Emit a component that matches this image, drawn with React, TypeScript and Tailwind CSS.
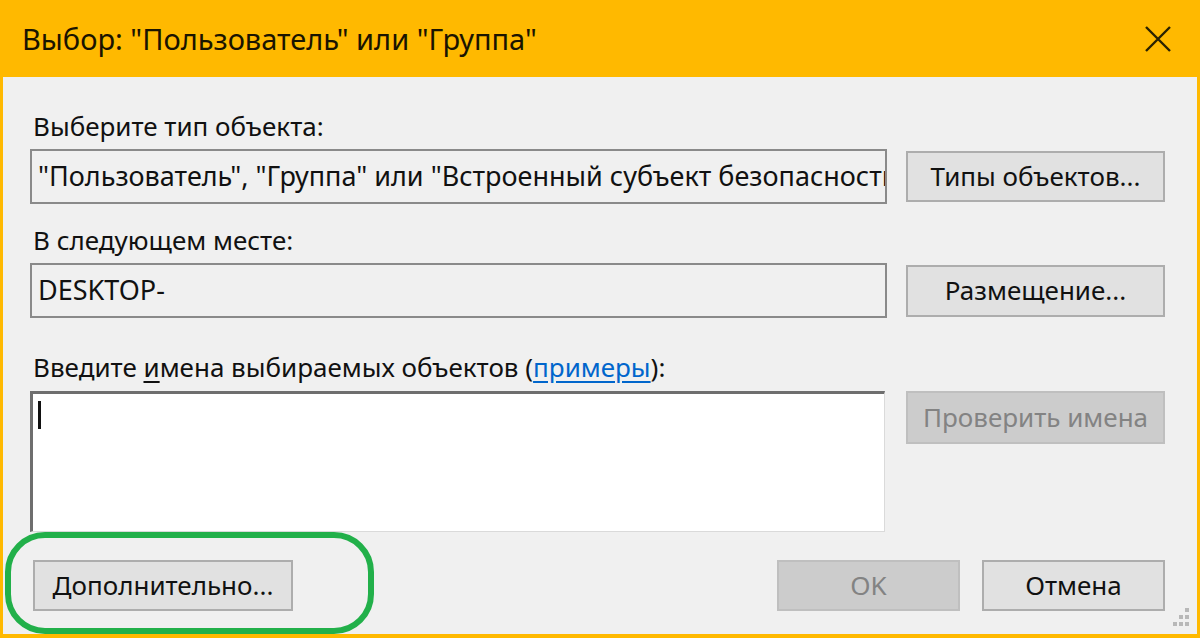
import React from "react";

const font = { fontFamily: '"Noto Sans", "Open Sans", sans-serif' };

type BtnProps = {
    label: string;
    disabled?: boolean;
    className?: string;
}

const Btn = ({ label, disabled, className }: BtnProps) => {
    return <div
        className={`flex items-center justify-center border-2 text-[26px] ${disabled ? "bg-[#cccccc] border-[#bfbfbf] text-[#838383]" : "bg-[#e1e1e1] border-[#adadad] text-[#111]"} ${className ?? ""}`}
    >
        {label}
    </div>
}

const CloseIcon = () => (
    <svg width="28" height="28" viewBox="0 0 28 28">
        <path d="M2 2 L26 26 M26 2 L2 26" stroke="#2a2200" strokeWidth="2.4" fill="none"/>
    </svg>
)

const SizeGrip = () => (
    <svg width="24" height="22" viewBox="0 0 24 22" className="absolute right-[6px] bottom-[6px]">
        {[[18, 2], [12, 9], [18, 9], [6, 16], [12, 16], [18, 16]].map(([x, y], i) => (
            <rect key={i} x={x} y={y} width="4" height="4" fill="#b8b8b8"/>
        ))}
    </svg>
)

export default function App() {
    return <div className="w-[1200px] h-[638px] bg-[#ffb900] flex flex-col overflow-hidden" style={font}>
        <div className="h-[77px] shrink-0 flex items-center justify-between pl-[22px] pr-[28px]">
            <span className="text-[29px] text-[#1a1400]">Выбор: "Пользователь" или "Группа"</span>
            <CloseIcon/>
        </div>
        <div className="relative flex-1 mx-[3px] mb-[4px] bg-[#f0f0f0] pl-[27px] pr-[32px] pt-[33px] text-[26px] text-[#111]">
            <div className="leading-[32px] pl-[3px]">Выберите тип объекта:</div>
            <div className="flex items-center gap-[19px] mt-[7px]">
                <div className="w-[857px] h-[55px] border-2 border-[#8a8a8a] bg-[#f0f0f0] flex items-center px-[6px] overflow-hidden whitespace-nowrap text-[27px]">
                    "Пользователь", "Группа" или "Встроенный субъект безопасности"
                </div>
                <Btn label="Типы объектов..." className="w-[259px] h-[51px]"/>
            </div>
            <div className="leading-[32px] pl-[3px] mt-[20px]">В следующем месте:</div>
            <div className="flex items-center gap-[19px] mt-[7px]">
                <div className="w-[857px] h-[55px] border-2 border-[#8a8a8a] bg-[#f0f0f0] flex items-center px-[6px] text-[27px]">
                    DESKTOP-
                </div>
                <Btn label="Размещение..." className="w-[259px] h-[52px]"/>
            </div>
            <div className="leading-[32px] pl-[3px] mt-[33px]">
                Введите <span className="underline underline-offset-4">и</span>мена выбираемых объектов (<span className="text-[#0066cc] underline underline-offset-4">примеры</span>):
            </div>
            <div className="flex items-start gap-[21px] mt-[8px]">
                <div className="w-[855px] h-[141px] bg-white border-t-[3px] border-l-[3px] border-r border-b border-t-[#6e6e6e] border-l-[#6e6e6e] border-r-[#dadada] border-b-[#dadada] pl-[5px] pt-[7px]">
                    <div className="w-[3px] h-[28px] bg-[#111]"/>
                </div>
                <Btn label="Проверить имена" disabled className="w-[259px] h-[53px]"/>
            </div>
            <div className="flex items-center mt-[28px] pl-[3px]">
                <Btn label="Дополнительно..." className="w-[260px] h-[51px]"/>
                <div className="flex-1"/>
                <Btn label="OK" disabled className="w-[183px] h-[51px]"/>
                <Btn label="Отмена" className="w-[183px] h-[51px] ml-[22px]"/>
            </div>
            <div className="absolute left-[2px] top-[455px] w-[369px] h-[102px] rounded-[40px] border-[6px] border-[#22b04a]"/>
            <SizeGrip/>
        </div>
    </div>
}
